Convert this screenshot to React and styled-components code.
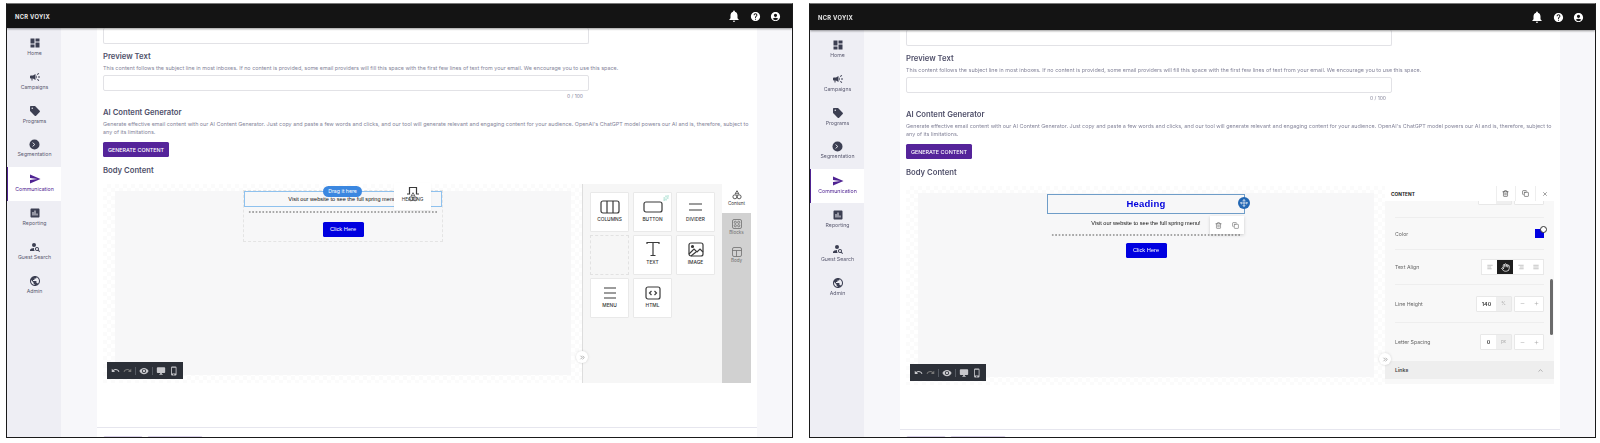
import React from 'react';
import styled, {createGlobalStyle} from 'styled-components';
import {
    MdDashboard, MdCampaign, MdSend, MdAssessment, MdPersonSearch, MdNotifications, MdHelp, MdAccountCircle,
    MdUndo, MdRedo, MdVisibility, MdDesktopWindows, MdPhoneIphone, MdSell, MdPublic
} from 'react-icons/md';
import {
    Trash2, Copy, X, ChevronUp, ChevronsRight, Move, Minus, Plus, AlignLeft, AlignRight, AlignJustify, Hand, Sparkles
} from 'lucide-react';

const GlobalStyle = createGlobalStyle`
  html, body {
    margin: 0;
    background: #ffffff;
  }
  * {
    box-sizing: border-box;
  }
  body {
    font-family: Inter, "Liberation Sans", sans-serif;
    color: #4a4a60;
  }
`

const Page = styled.div`
  display: flex;
  gap: 16px;
  width: 1600px;
  height: 443px;
  padding: 3px 0 5px 6px;
  overflow: hidden;
  filter: blur(0.5px);
`

const Frame = styled.div`
  display: flex;
  flex-direction: column;
  width: 787px;
  height: 435px;
  border: 1.5px solid #1a1a1a;
  border-top-color: #777777;
  overflow: hidden;
  background: #f7f7fa;
`

const Header = styled.header`
  flex: none;
  display: flex;
  align-items: center;
  justify-content: space-between;
  height: ${props => props.$height}px;
  padding: 0 11px 0 8px;
  background: #141414;
  color: #ffffff;
  box-shadow: 0 1px 2px rgba(0, 0, 0, 0.4);
  z-index: 2;
`

const Logo = styled.div`
  font-size: 5.8px;
  font-weight: 700;
  letter-spacing: 0.3px;
  color: #e8e8e8;
`

const HeaderIcons = styled.div`
  display: flex;
  align-items: center;
  gap: 9px;
`

const Shell = styled.div`
  flex: 1;
  min-height: 0;
  display: grid;
  grid-template-columns: 54px 36px 660px 1fr;
`

const Sidebar = styled.nav`
  padding-top: 3px;
  background: #eeeef4;
`

const NavItem = styled.div`
  display: flex;
  flex-direction: column;
  align-items: center;
  height: 34px;
  padding-top: 6px;
  gap: 1px;
  font-size: 5.2px;
  color: ${props => props.$active ? '#4f2392' : '#5a5a70'};
  background: ${props => props.$active ? '#ffffff' : 'transparent'};
  border-left: 1.5px solid ${props => props.$active ? '#4f2392' : 'transparent'};

  svg {
    flex: none;
    color: ${props => props.$active ? '#4f2392' : '#3c3f52'};
  }
`

const Gutter = styled.div`
  background: #f7f7fa;
`

const Main = styled.main`
  display: flex;
  flex-direction: column;
  min-width: 0;
  padding-left: 6px;
  background: #ffffff;
`

const Field = styled.div`
  width: 486px;
  height: ${props => props.$height}px;
  border: 1px solid #e2e2e6;
  border-radius: 2px;
  background: #ffffff;
`

const SubjectField = styled(Field)`
  border-top: none;
`

const Title = styled.h3`
  margin: ${props => props.$top}px 0 0;
  font-size: 7.7px;
  line-height: 10px;
  font-weight: 600;
  color: #50506a;
`

const Help = styled.p`
  width: 650px;
  margin: ${props => props.$top}px 0 ${props => props.$bottom || 0}px;
  font-size: 5.42px;
  line-height: 8px;
  color: #85859a;
`

const Counter = styled.div`
  width: 480px;
  margin-top: 2px;
  text-align: right;
  font-size: 5px;
  line-height: 7px;
  color: #85859a;
`

const GenerateButton = styled.button`
  display: block;
  width: 66px;
  height: 15px;
  margin-top: 6px;
  padding: 0;
  border: none;
  border-radius: 1.5px;
  background: #55249a;
  color: #ffffff;
  font-family: inherit;
  font-size: 5.4px;
  font-weight: 500;
`

const Editor = styled.div`
  display: flex;
  width: 648px;
  height: 199px;
  margin-top: ${props => props.$top}px;
`

const Canvas = styled.div`
  position: relative;
  flex: 1;
  padding: 7px 11px 8px 12px;
  background: repeating-conic-gradient(#fbfbfb 0 25%, #ffffff 0 50%) 0 0 / 8px 8px;
`

const CanvasInner = styled.div`
  display: flex;
  flex-direction: column;
  align-items: center;
  height: 100%;
  background: #f7f7f8;
`

const Email = styled.div`
  position: relative;
  display: flex;
  flex-direction: column;
  align-items: center;
  width: 198px;
  height: ${props => props.$outlined ? '50px' : 'auto'};
  outline: ${props => props.$outlined ? '1px dashed #e4e4e4' : 'none'};
`

const EmailText = styled.div`
  width: 100%;
  height: ${props => props.$boxed ? '16px' : 'auto'};
  margin-top: ${props => props.$boxed ? '0' : '2px'};
  border: ${props => props.$boxed ? '1px solid #8ec1ee' : 'none'};
  font: 5.6px/14px "Liberation Sans", sans-serif;
  text-align: center;
  color: #111111;
`

const HeadingBox = styled.div`
  width: 198px;
  height: 20px;
  margin-top: 1px;
  border: 1px solid #6f9dc8;
  font: bold 9.5px/18px "Liberation Sans", sans-serif;
  letter-spacing: 0.2px;
  text-align: center;
  color: #0000dd;
`

const DotsRule = styled.div`
  flex: none;
  width: 190px;
  height: 2px;
  margin-top: ${props => props.$top}px;
  background: radial-gradient(circle, #a8a8a8 0.9px, transparent 1.1px) 0 0 / 3.4px 2px repeat-x;
`

const EmailButton = styled.div`
  width: 41px;
  height: 15px;
  margin-top: ${props => props.$top}px;
  border-radius: 1.5px;
  background: #0000e0;
  color: #ffffff;
  font: 5.7px/15px "Liberation Sans", sans-serif;
  text-align: center;
`

const DragPill = styled.div`
  position: absolute;
  left: 79px;
  top: -5px;
  width: 39px;
  height: 11px;
  border-radius: 6px;
  background: #3b87e0;
  color: #ffffff;
  font-size: 5.2px;
  line-height: 11px;
  text-align: center;
`

const DragTile = styled.div`
  position: absolute;
  left: 150px;
  top: -8px;
  display: flex;
  flex-direction: column;
  align-items: center;
  gap: 1px;
  width: 37px;
  height: 27px;
  padding-top: 3px;
  background: #ffffff;
  font-size: 4.8px;
  color: #333333;
  box-shadow: 0 1px 2px rgba(0, 0, 0, 0.06);
`

const DragCursor = styled.span`
  position: absolute;
  left: 14px;
  top: 9px;
  line-height: 0;
`

const MoveHandle = styled.div`
  position: absolute;
  left: 191px;
  top: 4px;
  display: flex;
  align-items: center;
  justify-content: center;
  width: 12px;
  height: 12px;
  border-radius: 50%;
  background: #2468b4;
  color: #ffffff;
`

const RowPopup = styled.div`
  position: absolute;
  left: 163px;
  top: 23px;
  display: flex;
  align-items: center;
  justify-content: space-around;
  width: 34px;
  height: 18px;
  background: #ffffff;
  color: #666666;
  box-shadow: 0 1px 3px rgba(0, 0, 0, 0.18);
`

const HistoryBar = styled.div`
  position: absolute;
  left: 4px;
  bottom: 4px;
  display: flex;
  align-items: center;
  gap: 3px;
  height: 17px;
  padding: 0 4px;
  background: #2c3038;
  color: #c8c8cc;
`

const BarDivider = styled.span`
  width: 1px;
  height: 8px;
  background: #555a62;
`

const CollapseButton = styled.div`
  position: absolute;
  right: -6px;
  bottom: 20px;
  display: flex;
  align-items: center;
  justify-content: center;
  width: 12px;
  height: 12px;
  border-radius: 50%;
  background: #ffffff;
  color: #777777;
  box-shadow: 0 0 3px rgba(0, 0, 0, 0.15);
  z-index: 1;
`

const Panel = styled.aside`
  display: flex;
  width: 169px;
  border-left: 1px solid #dddddd;
  background: #f6f6f6;
`

const TileGrid = styled.div`
  flex: 1;
  display: grid;
  grid-template-columns: repeat(3, 39px);
  grid-auto-rows: 40px;
  gap: 3px 4px;
  padding: 8px 0 0 7px;
`

const Tile = styled.div`
  display: flex;
  flex-direction: column;
  align-items: center;
  justify-content: flex-end;
  position: relative;
  gap: 2px;
  padding-bottom: 9px;
  background: #ffffff;
  border: 1px solid #e9e9e9;
  border-radius: 1px;
  font-size: 4.8px;
  font-weight: 500;
  color: #333333;

  .spark {
    position: absolute;
    top: 2px;
    right: 2px;
    color: #93d6c4;
  }
`

const EmptyTile = styled.div`
  border: 1px dashed #e2e2e2;
`

const TabRail = styled.div`
  flex: none;
  width: 29px;
  background: #d1d1d1;
`

const Tab = styled.div`
  display: flex;
  flex-direction: column;
  align-items: center;
  justify-content: center;
  height: 28.5px;
  gap: 1px;
  background: ${props => props.$active ? '#ffffff' : 'transparent'};
  color: ${props => props.$active ? '#333333' : '#6f6f6f'};
  font-size: 4.6px;
`

const PropsPanel = styled.aside`
  position: relative;
  display: flex;
  flex-direction: column;
  width: 169px;
  height: 198px;
  background: #f8f8f8;
`

const PropsHeader = styled.div`
  flex: none;
  display: flex;
  align-items: center;
  height: 15px;
  padding-left: 6px;
  background: #ffffff;
  font-size: 4.8px;
  font-weight: 700;
  color: #1c1c1c;
  z-index: 1;
`

const HeaderName = styled.span`
  flex: 1;
`

const HeaderAction = styled.div`
  display: flex;
  align-items: center;
  justify-content: center;
  width: 19.5px;
  height: 100%;
  border-left: 1px solid #eeeeee;
  color: #444444;
`

const PropsBody = styled.div`
  flex: 1;
  min-height: 0;
  display: flex;
  flex-direction: column;
  justify-content: flex-end;
  overflow: hidden;
  padding-bottom: 5px;
`

const PropRow = styled.div`
  flex: none;
  display: flex;
  align-items: center;
  justify-content: space-between;
  height: ${props => props.$height}px;
  margin: 0 10px;
  padding-bottom: ${props => props.$lift || 0}px;
  border-bottom: ${props => props.$last ? 'none' : '1px solid #eeeeee'};
  font-size: 5.2px;
  color: #666666;
`

const Controls = styled.div`
  display: flex;
  align-items: center;
  gap: 2px;
`

const Unit = styled.div`
  display: flex;
  height: 16px;
  border: 1px solid #e8e8e8;
  border-radius: 1px;
  background: #ffffff;
  font-size: 5.4px;
  font-weight: 600;
  line-height: 14px;
  color: #333333;
`

const UnitValue = styled.span`
  width: ${props => props.$width}px;
  text-align: center;
`

const UnitName = styled.span`
  width: 15px;
  background: #efefef;
  color: #aaaaaa;
  font-size: 4.6px;
  font-weight: 400;
  text-align: center;
`

const Stepper = styled.div`
  display: grid;
  grid-template-columns: 14px 14px;
  height: 16px;
  border: 1px solid #e8e8e8;
  border-radius: 1px;
  background: #ffffff;
  color: #999999;

  span {
    display: flex;
    align-items: center;
    justify-content: center;
  }
`

const AlignGroup = styled.div`
  display: flex;
  height: 16px;
  border: 1px solid #e8e8e8;
  background: #ffffff;
`

const AlignButton = styled.div`
  display: flex;
  align-items: center;
  justify-content: center;
  width: ${props => props.$active ? '16px' : '15px'};
  background: ${props => props.$active ? '#1e1e1e' : 'transparent'};
  color: ${props => props.$active ? '#ffffff' : '#888888'};
`

const Swatch = styled.div`
  position: relative;
  width: 9px;
  height: 9px;
  background: #0000e0;

  &::after {
    content: "";
    position: absolute;
    top: -3px;
    right: -3px;
    width: 5px;
    height: 5px;
    border: 1.5px solid #333333;
    border-radius: 50%;
    background: #ffffff;
  }
`

const LinksBar = styled.div`
  flex: none;
  display: flex;
  align-items: center;
  justify-content: space-between;
  height: 18px;
  padding: 0 10px;
  background: #eeeeee;
  font-size: 5.2px;
  font-weight: 600;
  color: #444444;
`

const ScrollThumb = styled.div`
  position: absolute;
  right: 1px;
  top: 93px;
  width: 3px;
  height: 56px;
  border-radius: 2px;
  background: #6b6b6b;
`

const Footer = styled.div`
  display: flex;
  gap: 4px;
  margin: auto 0 0 -6px;
  padding: ${props => props.$height - 2}px 0 0 6px;
  height: ${props => props.$height}px;
  border-top: 1px solid #e6e6ee;
`

const FooterButton = styled.div`
  width: ${props => props.$width}px;
  height: 10px;
  border: 1px solid #d9d0e8;
  border-radius: 2px;
`

const Outline = ({children, w = 24, h = 20, size = 1.2}) => (
    <svg width={w} height={h} viewBox={`0 0 ${w} ${h}`} fill="none" stroke="#3a3a3a" strokeWidth={size}>
        {children}
    </svg>
);

const ColumnsIcon = () => (
    <Outline w={20} h={14}>
        <rect x="1" y="1" width="18" height="12" rx="2"/>
        <path d="M7 1v12M13 1v12"/>
    </Outline>
);
const ButtonIcon = () => (
    <Outline w={20} h={14}>
        <rect x="1" y="2" width="18" height="10" rx="2"/>
    </Outline>
);
const DividerIcon = () => (
    <Outline w={20} h={14}>
        <path d="M3 4h13M3 10h13"/>
    </Outline>
);
const TextIcon = () => (
    <Outline w={16} h={16}>
        <path d="M2 3V1.5h12V3M8 1.5v13M5.5 14.5h5"/>
    </Outline>
);
const ImageIcon = () => (
    <Outline w={16} h={15}>
        <rect x="1" y="1" width="14" height="13" rx="2"/>
        <circle cx="4.5" cy="4.5" r="1" fill="#3a3a3a"/>
        <path d="M1 12l5-5 3 3 3-3 3 3M3 14l5-4"/>
    </Outline>
);
const MenuIcon = () => (
    <Outline w={16} h={14}>
        <path d="M2 2h12M2 7h12M2 12h12"/>
    </Outline>
);
const HtmlIcon = () => (
    <Outline w={16} h={14}>
        <rect x="1" y="1" width="14" height="12" rx="2"/>
        <path d="M6.5 5L4.5 7l2 2M9.5 5l2 2-2 2"/>
    </Outline>
);
const HeadingIcon = () => (
    <Outline w={12} h={9}>
        <path d="M0 8h2.5V1.5h7V8H12"/>
    </Outline>
);
const ShapesIcon = ({color = 'currentColor'}) => (
    <svg width="10" height="10" viewBox="0 0 10 10" fill="none" stroke={color} strokeWidth="0.8">
        <path d="M5 0.7L6.8 3.8H3.2z"/>
        <circle cx="2.9" cy="6.8" r="2"/>
        <circle cx="7.1" cy="6.8" r="2"/>
    </svg>
);
const BlocksIcon = () => (
    <svg width="10" height="10" viewBox="0 0 10 10" fill="none" stroke="currentColor" strokeWidth="0.8">
        <rect x="0.5" y="0.5" width="9" height="9" rx="1.5"/>
        <circle cx="3.3" cy="3.3" r="1.1"/>
        <circle cx="6.7" cy="3.3" r="1.1"/>
        <circle cx="3.3" cy="6.7" r="1.1"/>
        <circle cx="6.7" cy="6.7" r="1.1"/>
    </svg>
);
const BodyIcon = () => (
    <svg width="10" height="10" viewBox="0 0 10 10" fill="none" stroke="currentColor" strokeWidth="0.8">
        <rect x="0.5" y="0.5" width="9" height="9" rx="1.5"/>
        <path d="M0.5 3.5h9M4.5 3.5v6"/>
    </svg>
);
const SegmentIcon = () => (
    <svg width="11" height="11" viewBox="0 0 11 11">
        <circle cx="5.5" cy="5.5" r="5" fill="#3c3f52"/>
        <path d="M3.6 3.6L5.8 5.5 3.6 7.4" fill="none" stroke="#eeeef4" strokeWidth="0.9"/>
    </svg>
);

const navItems = [
    {label: 'Home', icon: <MdDashboard size={12}/>},
    {label: 'Campaigns', icon: <MdCampaign size={12}/>},
    {label: 'Programs', icon: <MdSell size={12}/>},
    {label: 'Segmentation', icon: <SegmentIcon/>},
    {label: 'Communication', icon: <MdSend size={12}/>, active: true},
    {label: 'Reporting', icon: <MdAssessment size={12}/>},
    {label: 'Guest Search', icon: <MdPersonSearch size={12}/>},
    {label: 'Admin', icon: <MdPublic size={12}/>},
];

const Window = ({headerHeight, footerHeight, children}) => (
    <Frame>
        <Header $height={headerHeight}>
            <Logo>NCR VOYIX</Logo>
            <HeaderIcons>
                <MdNotifications size={14}/>
                <MdHelp size={11}/>
                <MdAccountCircle size={11}/>
            </HeaderIcons>
        </Header>
        <Shell>
            <Sidebar>
                {navItems.map(item => (
                    <NavItem key={item.label} $active={item.active}>
                        {item.icon}
                        {item.label}
                    </NavItem>
                ))}
            </Sidebar>
            <Gutter/>
            <Main>
                <SubjectField $height={16}/>
                <Title $top={8}>Preview Text</Title>
                <Help $top={2} $bottom={3}>This content follows the subject line in most inboxes. If no content is provided, some email providers will fill this space with the first few lines of text from your email. We encourage you to use this space.</Help>
                <Field $height={16}/>
                <Counter>0 / 100</Counter>
                <Title $top={8}>AI Content Generator</Title>
                <Help $top={2}>Generate effective email content with our AI Content Generator. Just copy and paste a few words and clicks, and our tool will generate relevant and engaging content for your audience. OpenAI's ChatGPT model powers our AI and is, therefore, subject to any of its limitations.</Help>
                <GenerateButton>GENERATE CONTENT</GenerateButton>
                <Title $top={9}>Body Content</Title>
                <Editor $top={8}>{children}</Editor>
                <Footer $height={footerHeight}>
                    <FooterButton $width={40}/>
                    <FooterButton $width={56}/>
                </Footer>
            </Main>
            <Gutter/>
        </Shell>
    </Frame>
);

const HistoryTools = () => (
    <HistoryBar>
        <MdUndo size={9}/>
        <MdRedo size={9} color="#777777"/>
        <BarDivider/>
        <MdVisibility size={10}/>
        <BarDivider/>
        <MdDesktopWindows size={10}/>
        <MdPhoneIphone size={10}/>
    </HistoryBar>
);

const ContentPanel = () => (
    <Panel>
        <TileGrid>
            <Tile><ColumnsIcon/>COLUMNS</Tile>
            <Tile><Sparkles className="spark" size={6}/><ButtonIcon/>BUTTON</Tile>
            <Tile><DividerIcon/>DIVIDER</Tile>
            <EmptyTile/>
            <Tile><TextIcon/>TEXT</Tile>
            <Tile><ImageIcon/>IMAGE</Tile>
            <Tile><MenuIcon/>MENU</Tile>
            <Tile><HtmlIcon/>HTML</Tile>
        </TileGrid>
        <TabRail>
            <Tab $active><ShapesIcon/>Content</Tab>
            <Tab><BlocksIcon/>Blocks</Tab>
            <Tab><BodyIcon/>Body</Tab>
        </TabRail>
    </Panel>
);

const Sizes = ({value, unit, width}) => (
    <Controls>
        <Unit>
            <UnitValue $width={width}>{value}</UnitValue>
            <UnitName>{unit}</UnitName>
        </Unit>
        <Stepper>
            <span><Minus size={5}/></span>
            <span><Plus size={5}/></span>
        </Stepper>
    </Controls>
);

const StylePanel = () => (
    <PropsPanel>
        <PropsHeader>
            <HeaderName>CONTENT</HeaderName>
            <HeaderAction><Trash2 size={7}/></HeaderAction>
            <HeaderAction><Copy size={7}/></HeaderAction>
            <HeaderAction><X size={6}/></HeaderAction>
        </PropsHeader>
        <PropsBody>
            <PropRow $height={32} $lift={10}>Font Size<Sizes value="" unit="" width={17}/></PropRow>
            <PropRow $height={32}>Color<Swatch/></PropRow>
            <PropRow $height={35}>
                Text Align
                <AlignGroup>
                    <AlignButton><AlignLeft size={6}/></AlignButton>
                    <AlignButton $active><Hand size={9}/></AlignButton>
                    <AlignButton><AlignRight size={6}/></AlignButton>
                    <AlignButton><AlignJustify size={6}/></AlignButton>
                </AlignGroup>
            </PropRow>
            <PropRow $height={38}>Line Height<Sizes value="140" unit="%" width={19}/></PropRow>
            <PropRow $height={38} $last>Letter Spacing<Sizes value="0" unit="px" width={15}/></PropRow>
            <LinksBar>Links<ChevronUp size={7} color="#888888"/></LinksBar>
        </PropsBody>
        <ScrollThumb/>
    </PropsPanel>
);

const App = () => (
    <>
        <GlobalStyle/>
        <Page>
            <Window headerHeight={24} footerHeight={10}>
                <Canvas>
                    <CanvasInner>
                        <Email $outlined>
                            <EmailText $boxed>Visit our website to see the full spring menu!</EmailText>
                            <DotsRule $top={4}/>
                            <EmailButton $top={9}>Click Here</EmailButton>
                            <DragPill>Drag it here</DragPill>
                            <DragTile>
                                <HeadingIcon/>
                                HEADING
                                <DragCursor><ShapesIcon color="#444444"/></DragCursor>
                            </DragTile>
                        </Email>
                    </CanvasInner>
                    <HistoryTools/>
                    <CollapseButton><ChevronsRight size={7}/></CollapseButton>
                </Canvas>
                <ContentPanel/>
            </Window>
            <Window headerHeight={26} footerHeight={8}>
                <Canvas>
                    <CanvasInner>
                        <Email>
                            <HeadingBox>Heading</HeadingBox>
                            <EmailText>Visit our website to see the full spring menu!</EmailText>
                            <DotsRule $top={4}/>
                            <EmailButton $top={7}>Click Here</EmailButton>
                            <MoveHandle><Move size={8}/></MoveHandle>
                            <RowPopup>
                                <Trash2 size={7}/>
                                <Copy size={7}/>
                            </RowPopup>
                        </Email>
                    </CanvasInner>
                    <HistoryTools/>
                    <CollapseButton><ChevronsRight size={7}/></CollapseButton>
                </Canvas>
                <StylePanel/>
            </Window>
        </Page>
    </>
);

export default App;
